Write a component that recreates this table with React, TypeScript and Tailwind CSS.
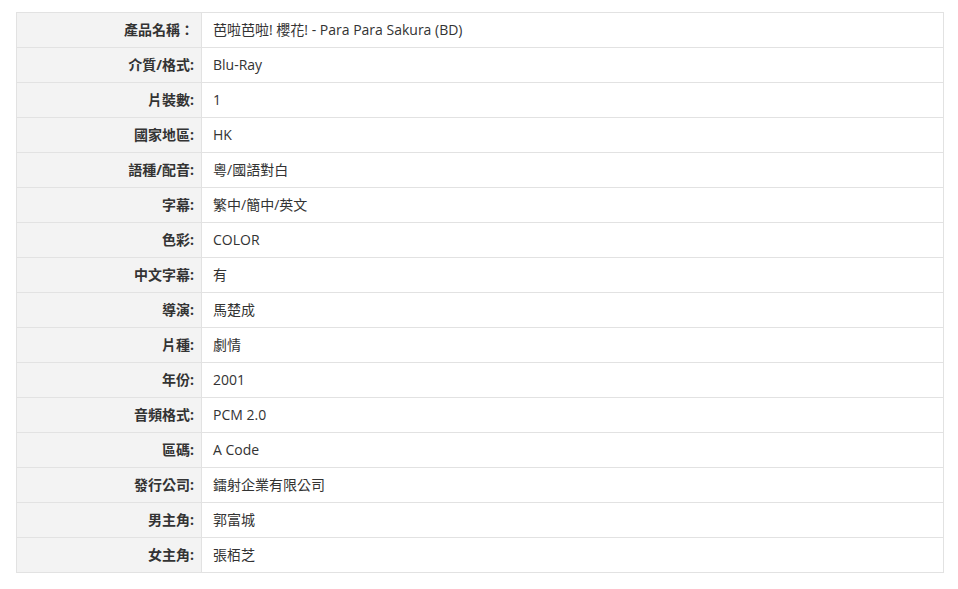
import React from "react";

const rows: [string, string][] = [
  ["產品名稱：", "芭啦芭啦! 櫻花! - Para Para Sakura (BD)"],
  ["介質/格式:", "Blu-Ray"],
  ["片裝數:", "1"],
  ["國家地區:", "HK"],
  ["語種/配音:", "粵/國語對白"],
  ["字幕:", "繁中/簡中/英文"],
  ["色彩:", "COLOR"],
  ["中文字幕:", "有"],
  ["導演:", "馬楚成"],
  ["片種:", "劇情"],
  ["年份:", "2001"],
  ["音頻格式:", "PCM 2.0"],
  ["區碼:", "A Code"],
  ["發行公司:", "鐳射企業有限公司"],
  ["男主角:", "郭富城"],
  ["女主角:", "張栢芝"],
];

export default function App() {
  return (
    <div
      className="w-[958px] h-[589px] bg-white pt-[12px] pl-[16px]"
      style={{ fontFamily: '"Open Sans", "Noto Sans CJK TC", sans-serif' }}
    >
      <table className="w-[928px] border-collapse border border-[#e2e2e2] text-[14px] text-[#333]">
        <tbody>
          {rows.map(([k, v]) => (
            <tr key={k} className="h-[35px]">
              <td className="w-[185px] bg-[#f3f3f3] border border-[#e2e2e2] text-right font-bold pr-[7px] p-0 leading-[20px]">
                {k}
              </td>
              <td className="border border-[#e2e2e2] pl-[11px] p-0 leading-[20px]">{v}</td>
            </tr>
          ))}
        </tbody>
      </table>
    </div>
  );
}
